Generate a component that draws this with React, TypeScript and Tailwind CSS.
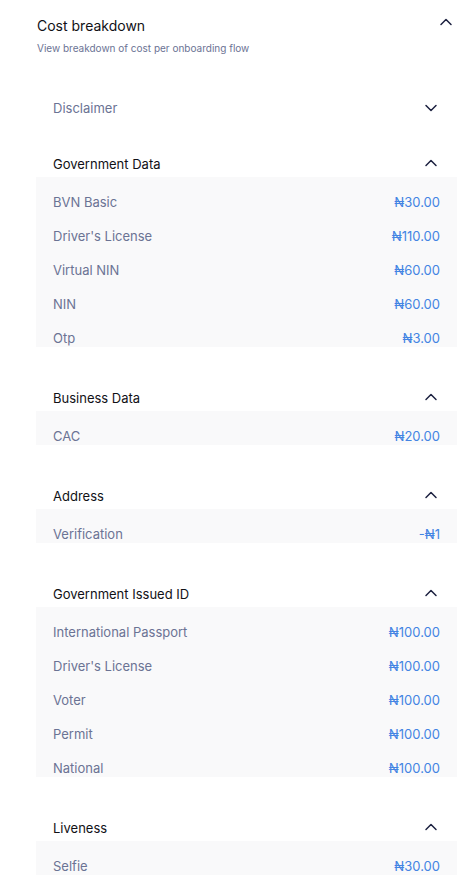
import React from 'react';
import { ChevronUp, ChevronDown } from 'lucide-react';

interface CostItem {
    label: string;
    price: string;
}

interface CostSection {
    title: string;
    items: CostItem[];
}

const SECTIONS: CostSection[] = [
    {
        title: 'Government Data',
        items: [
            { label: 'BVN Basic', price: '₦30.00' },
            { label: "Driver's License", price: '₦110.00' },
            { label: 'Virtual NIN', price: '₦60.00' },
            { label: 'NIN', price: '₦60.00' },
            { label: 'Otp', price: '₦3.00' },
        ],
    },
    {
        title: 'Business Data',
        items: [{ label: 'CAC', price: '₦20.00' }],
    },
    {
        title: 'Address',
        items: [{ label: 'Verification', price: '-₦1' }],
    },
    {
        title: 'Government Issued ID',
        items: [
            { label: 'International Passport', price: '₦100.00' },
            { label: "Driver's License", price: '₦100.00' },
            { label: 'Voter', price: '₦100.00' },
            { label: 'Permit', price: '₦100.00' },
            { label: 'National', price: '₦100.00' },
        ],
    },
    {
        title: 'Liveness',
        items: [{ label: 'Selfie', price: '₦30.00' }],
    },
];

const Section: React.FC<{ section: CostSection }> = ({ section }) => (
    <div className="mt-[36px]">
        {/* Header */}
        <div className="h-[28px] pt-[4px] flex items-center justify-between pl-[17px] pr-[16px]">
            <span className="text-[13px] text-[#111116]">{section.title}</span>
            <ChevronUp size={20} strokeWidth={1.8} className="text-[#1c2140] -mt-[5px]" />
        </div>

        {/* Rows */}
        <div className="bg-[#f9f9fa] px-[17px] pt-[17px] flex flex-col gap-[17px]">
            {section.items.map((item, idx) => (
                <div key={idx} className="flex items-center justify-between text-[13px] leading-[17px]">
                    <span className="text-[#6b7394]">{item.label}</span>
                    <span className="text-[#4384e3]">{item.price}</span>
                </div>
            ))}
        </div>
    </div>
);

const App: React.FC = () => {
    return (
        <div className="min-h-screen bg-white pt-[15px] pb-[10px] pl-[36px] pr-[18px] font-['Inter',sans-serif]">
            {/* Title */}
            <div className="h-[20px] flex items-center justify-between pl-[1px] pr-[1px]">
                <h2 className="text-[14px] text-[#111116]">Cost breakdown</h2>
                <ChevronUp size={20} strokeWidth={1.8} className="text-[#1c2140] -mt-[6px]" />
            </div>
            <p className="mt-[6px] pl-[1px] text-[10px] leading-[14px] text-[#6b7394]">
                View breakdown of cost per onboarding flow
            </p>

            {/* Disclaimer */}
            <div className="mt-[40px] h-[28px] flex items-center justify-between pl-[17px] pr-[16px]">
                <span className="text-[13px] text-[#6b7394]">Disclaimer</span>
                <ChevronDown size={20} strokeWidth={1.8} className="text-[#1c2140] -mt-[2px]" />
            </div>

            <div className="-mt-[10px]">
                {SECTIONS.map((section, idx) => (
                    <Section key={idx} section={section} />
                ))}
            </div>
        </div>
    );
};

export default App;
